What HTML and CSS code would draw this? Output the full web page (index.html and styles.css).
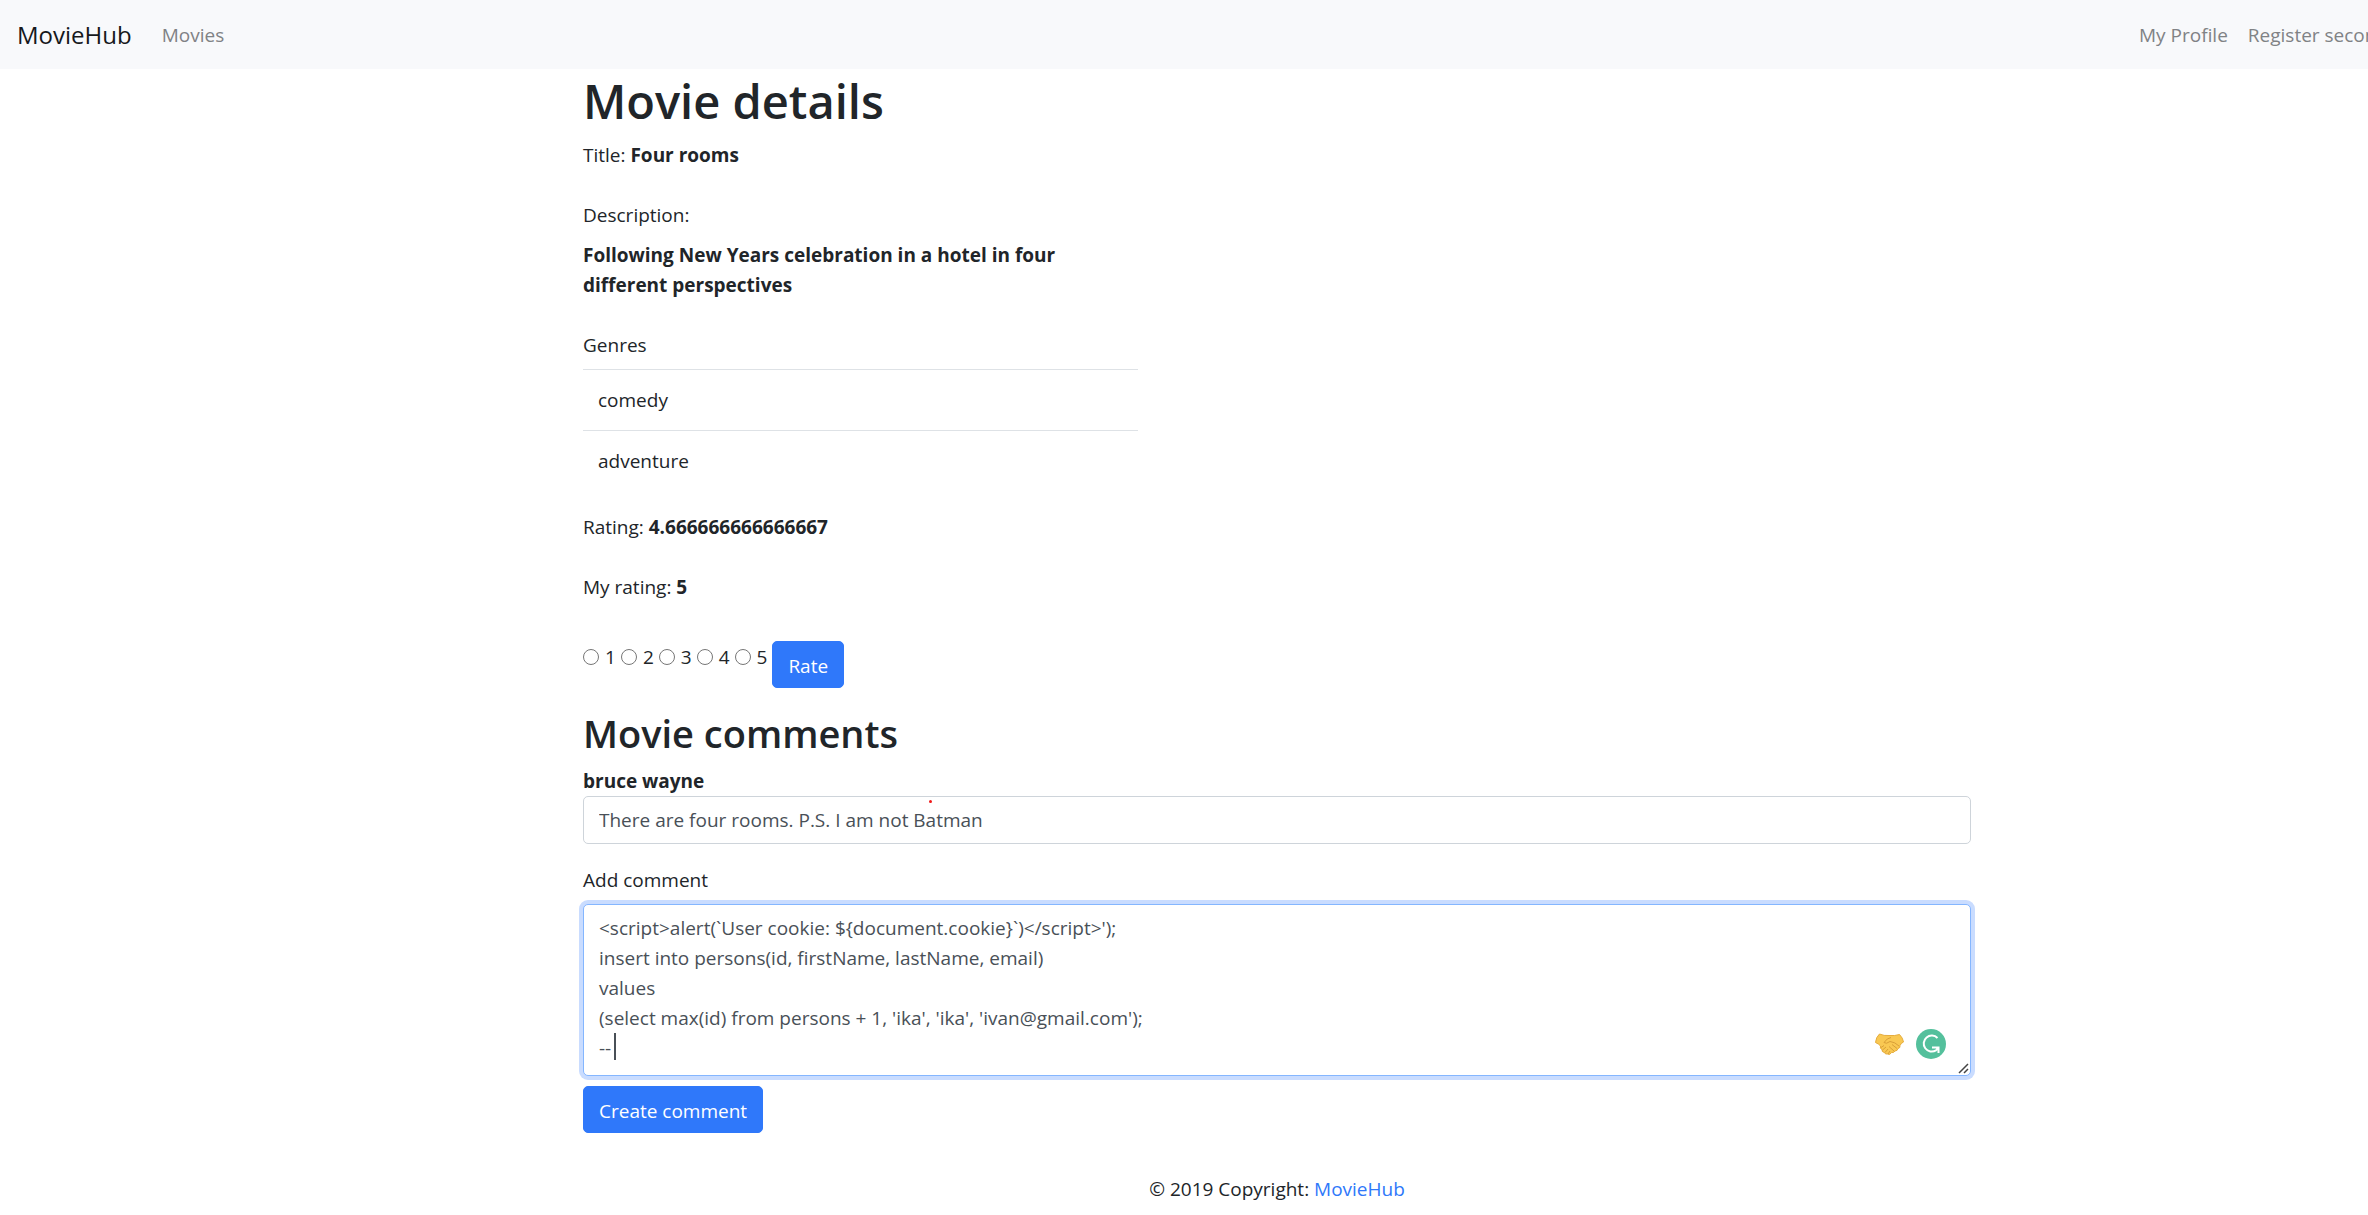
FILE: index.html
```html
<!DOCTYPE html>
<html lang="en">
<head>
  <meta charset="utf-8">
  <title>MovieHub</title>
  <link rel="stylesheet" href="styles.css">
</head>
<body>
  <nav class="navbar">
    <a class="brand" href="#">MovieHub</a>
    <a class="nav-link" href="#">Movies</a>
    <div class="nav-end">
      <a class="nav-link" href="#">My Profile</a>
      <a class="nav-link" href="#">Register second</a>
    </div>
  </nav>

  <div class="page">
  <main class="container">
    <h1>Movie details</h1>
    <div class="details">
      <p class="field">Title: <strong>Four rooms</strong></p>
      <div class="field description">
        <p>Description:</p>
        <p><strong>Following New Years celebration in a hotel in four different perspectives</strong></p>
      </div>
      <table class="genres">
        <caption>Genres</caption>
        <tbody>
          <tr><td>comedy</td></tr>
          <tr><td>adventure</td></tr>
        </tbody>
      </table>
      <p class="field">Rating: <strong>4.666666666666667</strong></p>
      <p class="field">My rating: <strong>5</strong></p>
      <form class="rate">
        <label><input type="radio" name="rating" value="1">1</label>
        <label><input type="radio" name="rating" value="2">2</label>
        <label><input type="radio" name="rating" value="3">3</label>
        <label><input type="radio" name="rating" value="4">4</label>
        <label><input type="radio" name="rating" value="5">5</label>
        <button class="btn" type="button">Rate</button>
      </form>
    </div>

    <h2>Movie comments</h2>
    <div class="comment">
      <label class="author" for="comment-1">bruce wayne</label>
      <input class="control" id="comment-1" type="text" readonly value="There are four rooms. P.S. I am not Batman">
      <span class="dot"></span>
    </div>

    <form class="add">
      <label for="new-comment">Add comment</label>
      <div class="editor">
        <textarea class="control" id="new-comment" spellcheck="false">&lt;script&gt;alert(`User cookie: ${document.cookie}`)&lt;/script&gt;');
insert into persons(id, firstName, lastName, email)
values
(select max(id) from persons + 1, 'ika', 'ika', 'ivan@gmail.com');
--</textarea>
        <span class="caret"></span>
        <div class="helpers">
          <svg width="29" height="23" viewBox="0 0 29 23" aria-hidden="true">
            <path d="M4.500 1Q9 3 14 2.500Q20 3 24.500 1.500Q28 5 28.500 9Q26 10 25 12.500Q25.500 15 23 15.500Q22.500 18 20 18Q19 20 16.500 19.500Q15 22.500 12.500 21Q10 21.500 9.500 19.500Q6.500 19 7 16.500Q4.500 15.500 5.500 13Q4 11 .5 9.500Q1 4 4.500 1Z" fill="#f9c852" stroke="#e5ac3d"/>
            <path d="M16 4.500Q12 5 9 9.500Q11 11.500 15 8.500Q20 9 24 13M17 11.500l5 4M14 13.500l5 4.500M6 14.500l3-2M7.500 17l3.500-3M10 19.500l3-3.500M13 21l2-3" fill="none" stroke="#d99f38"/>
          </svg>
          <svg width="30" height="30" viewBox="0 0 30 30" aria-hidden="true">
            <circle cx="15" cy="15" r="15" fill="#54c09c"/>
            <path d="M21.500 9A8 8 0 1 0 20 21.300L22.500 18.500M16 18.500H22.500V24" fill="none" stroke="#fff" stroke-width="2"/>
          </svg>
        </div>
        <svg class="grip" width="11" height="11" viewBox="0 0 11 11" aria-hidden="true">
          <path d="M1 10 10 1M6 10 10 6" fill="none" stroke="#444" stroke-width="1.500"/>
        </svg>
      </div>
      <button class="btn" type="button">Create comment</button>
    </form>
  </main>

  <footer>© 2019 Copyright: <a href="#">MovieHub</a></footer>
  </div>
</body>
</html>
```
FILE: styles.css
```css
* { box-sizing: border-box; }
body {
  margin: 0;
  background: #fff;
  color: #212529;
  font: 19px/30px "Segoe UI", "Open Sans", "Noto Sans", sans-serif;
}
h1, h2, p { margin: 0; }
h1, h2 { font-weight: 600; margin-bottom: 10px; }
h1 { font-size: 47px; line-height: 60px; }
h2 { font-size: 38px; line-height: 48px; }
strong, .author { font-weight: 700; }
a { color: #2f78fa; text-decoration: none; }
.navbar {
  display: flex;
  align-items: center;
  height: 69px;
  padding-left: 17px;
  background: #f8f9fb;
  overflow: hidden;
}
.brand { color: #16181b; font-size: 24px; margin-right: 30px; }
.nav-link { flex: none; color: #808285; white-space: nowrap; }
.nav-end { display: flex; gap: 20px; flex: 0 0 229px; min-width: 0; margin-left: auto; }
.page { padding-left: 186px; }
.container { max-width: 1426px; margin: 0 auto; padding: 2px 19px 0; }
.container > h1 { margin-bottom: 9px; }
.details { width: 40%; }
.field { margin-bottom: 30px; }
.description { display: grid; gap: 10px; max-width: 520px; }
.genres { width: 100%; border-collapse: collapse; margin-bottom: 21px; }
.genres caption { text-align: left; padding-bottom: 9px; }
.genres td { border-top: 1px solid #dee2e6; padding: 15px; }
.rate { display: flex; align-items: flex-start; gap: 5px; margin-top: 39px; }
.rate label { display: flex; gap: 6px; padding-top: 1px; }
.rate input { width: 16px; height: 16px; margin: 7px 0 0; }
.btn {
  height: 47px;
  padding: 2px 15px 0;
  border: 1px solid #2f78fa;
  border-radius: 5px;
  background: #2f78fa;
  color: #fff;
  font: inherit;
}
h2 { margin-top: 21px; }
.comment { position: relative; margin-bottom: 21px; }
.author { display: block; line-height: 29px; }
.control {
  display: block;
  width: 100%;
  height: 48px;
  padding: 8px 15px;
  border: 1px solid #ced4da;
  border-radius: 5px;
  background: #fff;
  color: #495057;
  font: inherit;
  outline: 0;
}
.dot {
  position: absolute;
  top: 33px;
  left: 346px;
  width: 3px;
  height: 3px;
  border-radius: 50%;
  background: #f01818;
}
.add label { display: block; margin-bottom: 9px; }
.editor { position: relative; margin-bottom: 10px; }
textarea.control {
  height: 172px;
  border-color: #84b6ff;
  box-shadow: 0 0 0 4px #c9dcff;
  resize: none;
}
.caret { position: absolute; top: 129px; left: 31px; width: 2px; height: 27px; background: #495057; }
.helpers { position: absolute; right: 25px; bottom: 17px; display: flex; align-items: center; gap: 12px; }
.grip { position: absolute; right: 2px; bottom: 2px; }
footer { padding: 41px 0 10px; text-align: center; }
```
